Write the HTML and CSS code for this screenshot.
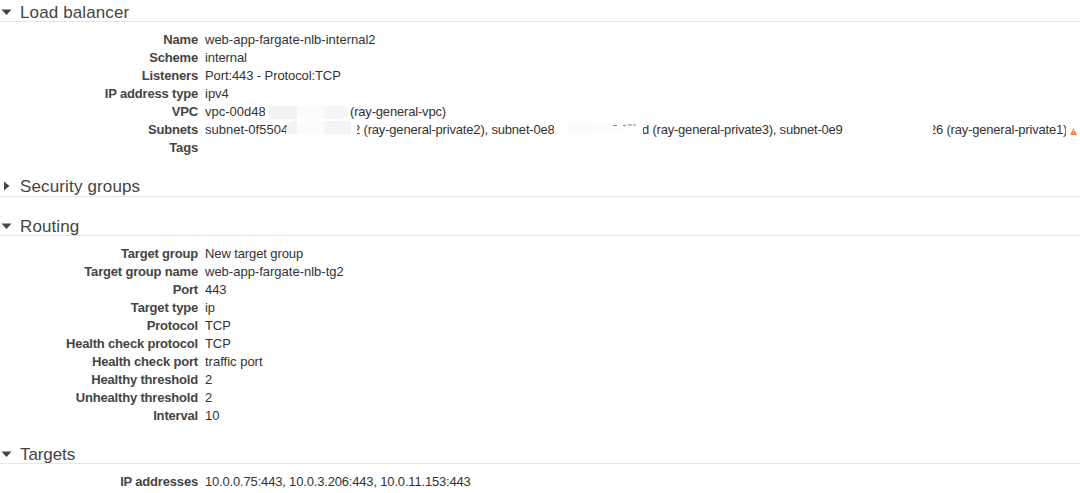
FILE: index.html
```html
<!DOCTYPE html>
<html lang="en">
<head>
<meta charset="utf-8">
<title>Review</title>
<link rel="stylesheet" href="styles.css">
</head>
<body>
<section class="section">
  <h2 class="heading"><svg class="arrow" viewBox="0 0 12 12"><path d="M1.5 3.5h10L6.5 9z"/></svg><span class="h-load">Load balancer</span></h2>
  <dl class="details">
    <dt>Name</dt><dd class="wide">web-app-fargate-nlb-internal2</dd>
    <dt>Scheme</dt><dd>internal</dd>
    <dt>Listeners</dt><dd>Port:443 - Protocol:TCP</dd>
    <dt>IP address type</dt><dd class="wide">ipv4</dd>
    <dt>VPC</dt>
    <dd class="parts"><span class="part vpc-id">vpc-00d48</span><span class="mask mask-vpc"></span><span class="part vpc-name">(ray-general-vpc)</span></dd>
    <dt>Subnets</dt>
    <dd class="parts"><span class="part sub-a">subnet-0f5504</span><span class="mask mask-a"></span><span class="part sub-b"><span class="cut-left">2</span> (ray-general-private2), subnet-0e8</span><span class="mask mask-b"><svg class="remnant" viewBox="0 0 30 3"><path d="M2 1.5h4M12 1.5h3M17 1h4M22 1h3"/></svg></span><span class="part sub-c"><span class="cut-d">d</span> (ray-general-private3), subnet-0e9</span><span class="mask mask-c"></span><span class="part sub-d"><span class="cut-left">2</span>6 (ray-general-private1)</span><svg class="warning" viewBox="0 0 7 7"><path class="warning-body" d="M3.5 0L7 7H0z"/><path class="warning-mark" d="M3.5 2v2.4M3.5 5v1"/></svg></dd>
    <dt>Tags</dt><dd></dd>
  </dl>
</section>
<section class="section">
  <h2 class="heading heading-closed"><svg class="arrow" viewBox="0 0 12 12"><path d="M4 1.5v9L9.5 6z"/></svg><span class="h-security">Security groups</span></h2>
</section>
<section class="section">
  <h2 class="heading"><svg class="arrow" viewBox="0 0 12 12"><path d="M1.5 3.5h10L6.5 9z"/></svg><span class="h-routing">Routing</span></h2>
  <dl class="details">
    <dt>Target group</dt><dd>New target group</dd>
    <dt>Target group name</dt><dd class="wide">web-app-fargate-nlb-tg2</dd>
    <dt>Port</dt><dd>443</dd>
    <dt>Target type</dt><dd>ip</dd>
    <dt>Protocol</dt><dd>TCP</dd>
    <dt>Health check protocol</dt><dd>TCP</dd>
    <dt>Health check port</dt><dd class="wide">traffic port</dd>
    <dt>Healthy threshold</dt><dd>2</dd>
    <dt>Unhealthy threshold</dt><dd>2</dd>
    <dt>Interval</dt><dd>10</dd>
  </dl>
</section>
<section class="section">
  <h2 class="heading"><svg class="arrow" viewBox="0 0 12 12"><path d="M1.5 3.5h10L6.5 9z"/></svg><span class="h-targets">Targets</span></h2>
  <dl class="details">
    <dt>IP addresses</dt><dd class="addresses">10.0.0.75:443, 10.0.3.206:443, 10.0.11.153:443</dd>
  </dl>
</section>
</body>
</html>
```
FILE: styles.css
```css
* { box-sizing: border-box; }
body {
  margin: 0;
  height: 493px;
  overflow: hidden;
  background: #fff;
  color: #333;
  font: 13px/18px "Liberation Sans", Arial, sans-serif;
  display: flex;
  flex-direction: column;
  gap: 17px;
}
.section:first-child { margin-bottom: 1px; }
.heading {
  margin: 0;
  height: 22px;
  padding-top: 2px;
  border-bottom: 1px solid #e6e6e6;
  display: flex;
  font-size: 17px;
  line-height: 21px;
  font-weight: 400;
  color: #444;
}
.heading-closed { padding-top: 1px; }
.h-load { letter-spacing: 0.12px; }
.h-security { letter-spacing: 0.14px; }
.h-routing { letter-spacing: 0.1px; }
.h-targets { letter-spacing: -0.1px; }
.arrow { width: 12px; height: 12px; margin: 4px 8px 0 0; flex: none; fill: #444; }
.details {
  margin: 9px 0 0;
  display: grid;
  grid-template-columns: 198px 1fr;
  column-gap: 7px;
  grid-auto-rows: 18px;
  white-space: nowrap;
}
dt { text-align: right; font-weight: 700; color: #444; letter-spacing: -0.18px; }
dd { margin: 0; letter-spacing: -0.1px; }
.wide { letter-spacing: 0; }
.addresses { letter-spacing: -0.175px; }
.parts { display: flex; }
.part { flex: none; height: 18px; }
.vpc-id { width: 60px; letter-spacing: 0; }
.vpc-name { letter-spacing: -0.18px; }
.sub-a { width: 81px; letter-spacing: 0; }
.sub-b { width: 197px; letter-spacing: -0.18px; }
.sub-c { width: 201px; letter-spacing: -0.21px; }
.sub-d { width: 133px; letter-spacing: -0.2px; }
.sub-b, .sub-c, .sub-d { overflow: hidden; }
.cut-left { margin-left: -4px; }
.cut-d { margin-left: -1px; }
.mask { flex: none; }
.mask-vpc {
  width: 85px;
  height: 13px;
  margin-top: 3px;
  background: linear-gradient(90deg, #fff 4px, #f2f2f0 4px 32px, #fbfbfd 32px 59px, #f5f5f5 59px 83px, #fff 83px);
  border-radius: 0 6px 8px 4px;
}
.mask-a {
  width: 71px;
  height: 13px;
  margin-top: 0;
  background: linear-gradient(90deg, #f2f2f0 11px, #fbfbfd 11px 38px, #f4f4f4 38px 65px, #fff 65px);
  border-radius: 8px 0 0 0;
}
.mask-b {
  width: 89px;
  height: 10px;
  margin-top: 2px;
  background: linear-gradient(90deg, #fff 13px, #fbfbfb 13px 41px, #fdfdfd 41px 75px, #fff 75px);
}
.mask-c {
  width: 89px;
  height: 13px;
  background: linear-gradient(90deg, #fdfdfd 20px, #fefefe 20px);
}
.remnant { display: block; width: 30px; height: 3px; margin: 1px 0 0 57px; fill: none; stroke: #888; }
.warning { width: 7px; height: 7px; margin: 7px 0 0 4px; flex: none; }
.warning-body { fill: #e98250; }
.warning-mark { fill: none; stroke: #f8c8a8; }
```
